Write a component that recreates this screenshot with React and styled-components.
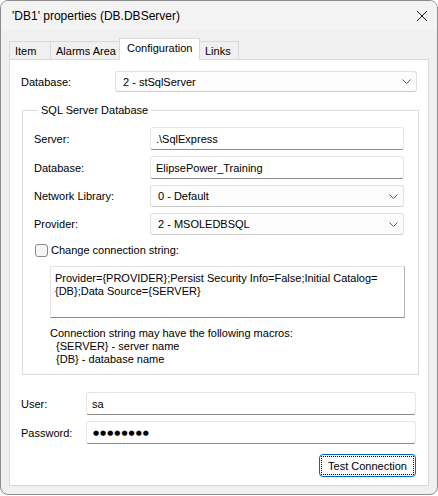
import React from 'react';
import styled, { createGlobalStyle } from 'styled-components';

const GlobalStyle = createGlobalStyle`
  html, body {
    margin: 0;
    padding: 0;
    background: #ffffff;
  }
  body {
    font-family: "Liberation Sans", Arial, sans-serif;
    font-size: 11px;
    color: #000;
  }
`;

const Window = styled.div`
  box-sizing: border-box;
  width: 438px;
  height: 495px;
  border: 1px solid #8c8c8c;
  border-radius: 8px;
  background: #f0f0f0;
  display: flex;
  flex-direction: column;
  overflow: hidden;
`;

const TitleBar = styled.div`
  height: 29px;
  display: flex;
  align-items: center;
  justify-content: space-between;
  padding: 0 9px 0 11px;
  background: #f3f3f3;
`;

const Title = styled.span`
  font-size: 12px;
  line-height: 16px;
`;

const CloseButton = styled.div`
  width: 12px;
  height: 12px;
  display: flex;
  margin-top: 1px;
`;

const Body = styled.div`
  flex: 1;
  display: flex;
  flex-direction: column;
  padding: 8px;
`;

const TabStrip = styled.div`
  display: flex;
  align-items: flex-end;
  height: 21px;
  position: relative;
  z-index: 1;
`;

const Tab = styled.div`
  box-sizing: border-box;
  height: ${(p) => (p.active ? '22px' : '18px')};
  width: ${(p) => p.w}px;
  padding-left: ${(p) => (p.active ? '7px' : '5px')};
  border: 1px solid #d9d9d9;
  border-bottom: ${(p) => (p.active ? '1px solid #ffffff' : 'none')};
  margin-left: ${(p) => (p.first ? '0' : '-1px')};
  margin-bottom: ${(p) => (p.active ? '-1px' : '0')};
  background: ${(p) => (p.active ? '#ffffff' : '#f0f0f0')};
  display: flex;
  align-items: ${(p) => (p.active ? 'flex-start' : 'center')};
  padding-top: ${(p) => (p.active ? '2px' : '1px')};
  white-space: nowrap;
  line-height: 14px;
`;

const Panel = styled.div`
  flex: 1;
  box-sizing: border-box;
  border: 1px solid #d9d9d9;
  background: #ffffff;
  padding: 11px 11px 0 11px;
  display: flex;
  flex-direction: column;
`;

const TopRow = styled.div`
  display: grid;
  grid-template-columns: 94px 302px;
  align-items: center;
`;

const Label = styled.span`
  line-height: 14px;
  white-space: nowrap;
`;

const SelectBox = styled.div`
  box-sizing: border-box;
  height: ${(p) => p.h || 21}px;
  border: 1px solid #e1e1e1;
  border-bottom-color: #cccccc;
  border-radius: 3px;
  background: #fcfcfc;
  display: flex;
  align-items: center;
  justify-content: space-between;
  padding: 0 5px 0 7px;
  line-height: 14px;
`;

const TextBox = styled.div`
  box-sizing: border-box;
  height: 23px;
  border: 1px solid #e6e6e6;
  border-bottom: 1px solid #8a8a8a;
  border-radius: 3px;
  background: #ffffff;
  display: flex;
  align-items: center;
  padding: 0 5px;
  line-height: 14px;
  white-space: nowrap;
`;

const Dots = styled.span`
  font-family: "DejaVu Sans", sans-serif;
  font-size: 7px;
  letter-spacing: 1px;
  padding-left: 1px;
`;

const Group = styled.fieldset`
  box-sizing: border-box;
  margin: 11px 0 0 1px;
  width: 396px;
  height: 272px;
  border: 1px solid #dcdcdc;
  padding: 10px 13px 0 11px;
  display: flex;
  flex-direction: column;
`;

const Legend = styled.legend`
  padding: 0 3px;
  margin-left: 4px;
  line-height: 14px;
`;

const FieldGrid = styled.div`
  display: grid;
  grid-template-columns: 116px 254px;
  grid-template-rows: 23px 23px 22px 22px;
  row-gap: 6px;
  align-items: center;
`;

const CheckRow = styled.label`
  display: flex;
  align-items: center;
  gap: 3px;
  margin-top: 8px;
  margin-left: 1px;
  line-height: 14px;
`;

const CheckBox = styled.span`
  box-sizing: border-box;
  width: 13px;
  height: 13px;
  border: 1px solid #8a8a8a;
  border-radius: 3px;
  background: #f6f6f6;
`;

const StringBox = styled.div`
  box-sizing: border-box;
  margin: 9px 0 0 16px;
  width: 355px;
  height: 52px;
  border: 1px solid #e3e3e3;
  border-bottom: 1px solid #8a8a8a;
  border-right-color: #b4b4b4;
  background: #ffffff;
  padding: 5px 4px 0;
  line-height: 13px;
`;

const Macros = styled.div`
  margin: 9px 0 0 16px;
  line-height: 13px;
  white-space: pre;
`;

const LoginGrid = styled.div`
  display: grid;
  grid-template-columns: 65px 330px;
  grid-auto-rows: 23px;
  row-gap: 6px;
  align-items: center;
  margin-top: 17px;
`;

const Footer = styled.div`
  display: flex;
  justify-content: flex-end;
  margin-top: 10px;
  padding-right: 1px;
`;

const Button = styled.button`
  box-sizing: border-box;
  width: 97px;
  height: 23px;
  border: 1px solid #0067c0;
  border-radius: 4px;
  background: #fdfdfd;
  padding: 1px;
  font: inherit;
  color: #000;
  display: flex;
`;

const FocusRing = styled.span`
  flex: 1;
  border: 1px dotted #000;
  display: flex;
  align-items: center;
  justify-content: center;
  line-height: 14px;
`;

const Chevron = () => (
  <svg width="9" height="5" viewBox="0 0 9 5">
    <path d="M0.5 0.5 L4.5 4.5 L8.5 0.5" fill="none" stroke="#5c5c5c" strokeWidth="1" />
  </svg>
);

const Select = ({ value, h }) => (
  <SelectBox h={h}>
    <span>{value}</span>
    <Chevron />
  </SelectBox>
);

const tabs = [
  { name: 'Item', w: 42 },
  { name: 'Alarms Area', w: 70 },
  { name: 'Configuration', w: 81, active: true },
  { name: 'Links', w: 40 },
];

const App = () => (
  <>
    <GlobalStyle />
    <Window>
      <TitleBar>
        <Title>'DB1' properties (DB.DBServer)</Title>
        <CloseButton>
          <svg width="12" height="12" viewBox="0 0 12 12">
            <path d="M1 1 L11 11 M11 1 L1 11" stroke="#1a1a1a" strokeWidth="1" />
          </svg>
        </CloseButton>
      </TitleBar>
      <Body>
        <TabStrip>
          {tabs.map((t, i) => (
            <Tab key={t.name} w={t.w} active={t.active} first={i === 0}>
              {t.name}
            </Tab>
          ))}
        </TabStrip>
        <Panel>
          <TopRow>
            <Label>Database:</Label>
            <Select value="2 - stSqlServer" />
          </TopRow>
          <Group>
            <Legend>SQL Server Database</Legend>
            <FieldGrid>
              <Label>Server:</Label>
              <TextBox>.\SqlExpress</TextBox>
              <Label>Database:</Label>
              <TextBox>ElipsePower_Training</TextBox>
              <Label>Network Library:</Label>
              <Select value="0 - Default" h={22} />
              <Label>Provider:</Label>
              <Select value="2 - MSOLEDBSQL" h={22} />
            </FieldGrid>
            <CheckRow>
              <CheckBox />
              Change connection string:
            </CheckRow>
            <StringBox>
              Provider={'{PROVIDER}'};Persist Security Info=False;Initial Catalog=
              <br />
              {'{DB}'};Data Source={'{SERVER}'}
            </StringBox>
            <Macros>
              {'Connection string may have the following macros:\n  {SERVER} - server name\n  {DB} - database name'}
            </Macros>
          </Group>
          <LoginGrid>
            <Label>User:</Label>
            <TextBox>sa</TextBox>
            <Label>Password:</Label>
            <TextBox>
              <Dots>●●●●●●●●</Dots>
            </TextBox>
          </LoginGrid>
          <Footer>
            <Button>
              <FocusRing>Test Connection</FocusRing>
            </Button>
          </Footer>
        </Panel>
      </Body>
    </Window>
  </>
);

export default App;
